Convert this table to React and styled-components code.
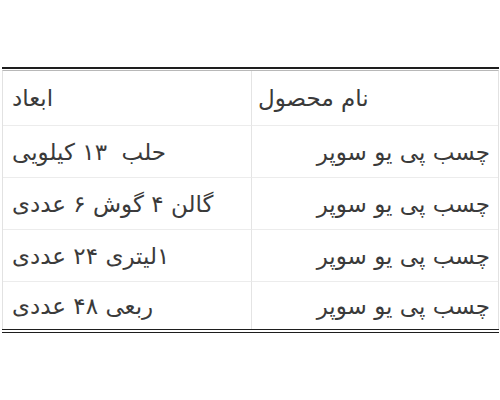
import React from "react";
import styled, { createGlobalStyle } from "styled-components";

const Global = createGlobalStyle`
  html, body { margin: 0; padding: 0; background: #fff; }
  body { width: 500px; height: 400px; overflow: hidden; }
`;

const Page = styled.div`
  padding-top: 67px;
  padding-left: 2px;
  padding-right: 1px;
`;

const Table = styled.div`
  border-top: 2px solid #1e1e1e;
  border-bottom: 4px double #1e1e1e;
`;

const Inner = styled.div`
  margin-top: 1px;
  border-top: 1px solid #b8b8b8;
  border-left: 1px solid #e2e2e2;
  border-right: 1px solid #e2e2e2;
  display: grid;
  grid-template-columns: 249px 1fr;
  direction: ltr;
`;

const Cell = styled.div`
  height: ${(p) => (p.$head ? 54 : p.$last ? 47 : 51)}px;
  border-bottom: ${(p) => (p.$last ? "none" : "1px solid #ececec")};
  border-right: ${(p) => (p.$left ? "1px solid #e4e4e4" : "none")};
  display: flex;
  align-items: center;
  justify-content: ${(p) => (p.$align === "right" ? "flex-end" : "flex-start")};
  padding: ${(p) => (p.$left ? "0 0 0 9px" : p.$align === "right" ? "0 8px 0 0" : "0 0 0 6px")};
  font-family: "DejaVu Sans", "Noto Sans", sans-serif;
  font-size: 23px;
  color: #3a3a3a;
  white-space: pre;
`;

const Text = styled.span`
  direction: rtl;
  unicode-bidi: isolate;
`;

const rows = [
  ["حلب  ۱۳ کیلویی", "چسب پی یو سوپر"],
  ["گالن ۴ گوش ۶ عددی", "چسب پی یو سوپر"],
  ["۱لیتری ۲۴ عددی", "چسب پی یو سوپر"],
  ["ربعی ۴۸ عددی", "چسب پی یو سوپر"],
];

export default function App() {
  return (
    <Page>
      <Global />
      <Table>
        <Inner>
          <Cell $head $left>
            <Text>ابعاد</Text>
          </Cell>
          <Cell $head>
            <Text>نام محصول</Text>
          </Cell>
          {rows.map(([dim, name], i) => (
            <React.Fragment key={i}>
              <Cell $left $last={i === rows.length - 1}>
                <Text>{dim}</Text>
              </Cell>
              <Cell $align="right" $last={i === rows.length - 1}>
                <Text>{name}</Text>
              </Cell>
            </React.Fragment>
          ))}
        </Inner>
      </Table>
    </Page>
  );
}
